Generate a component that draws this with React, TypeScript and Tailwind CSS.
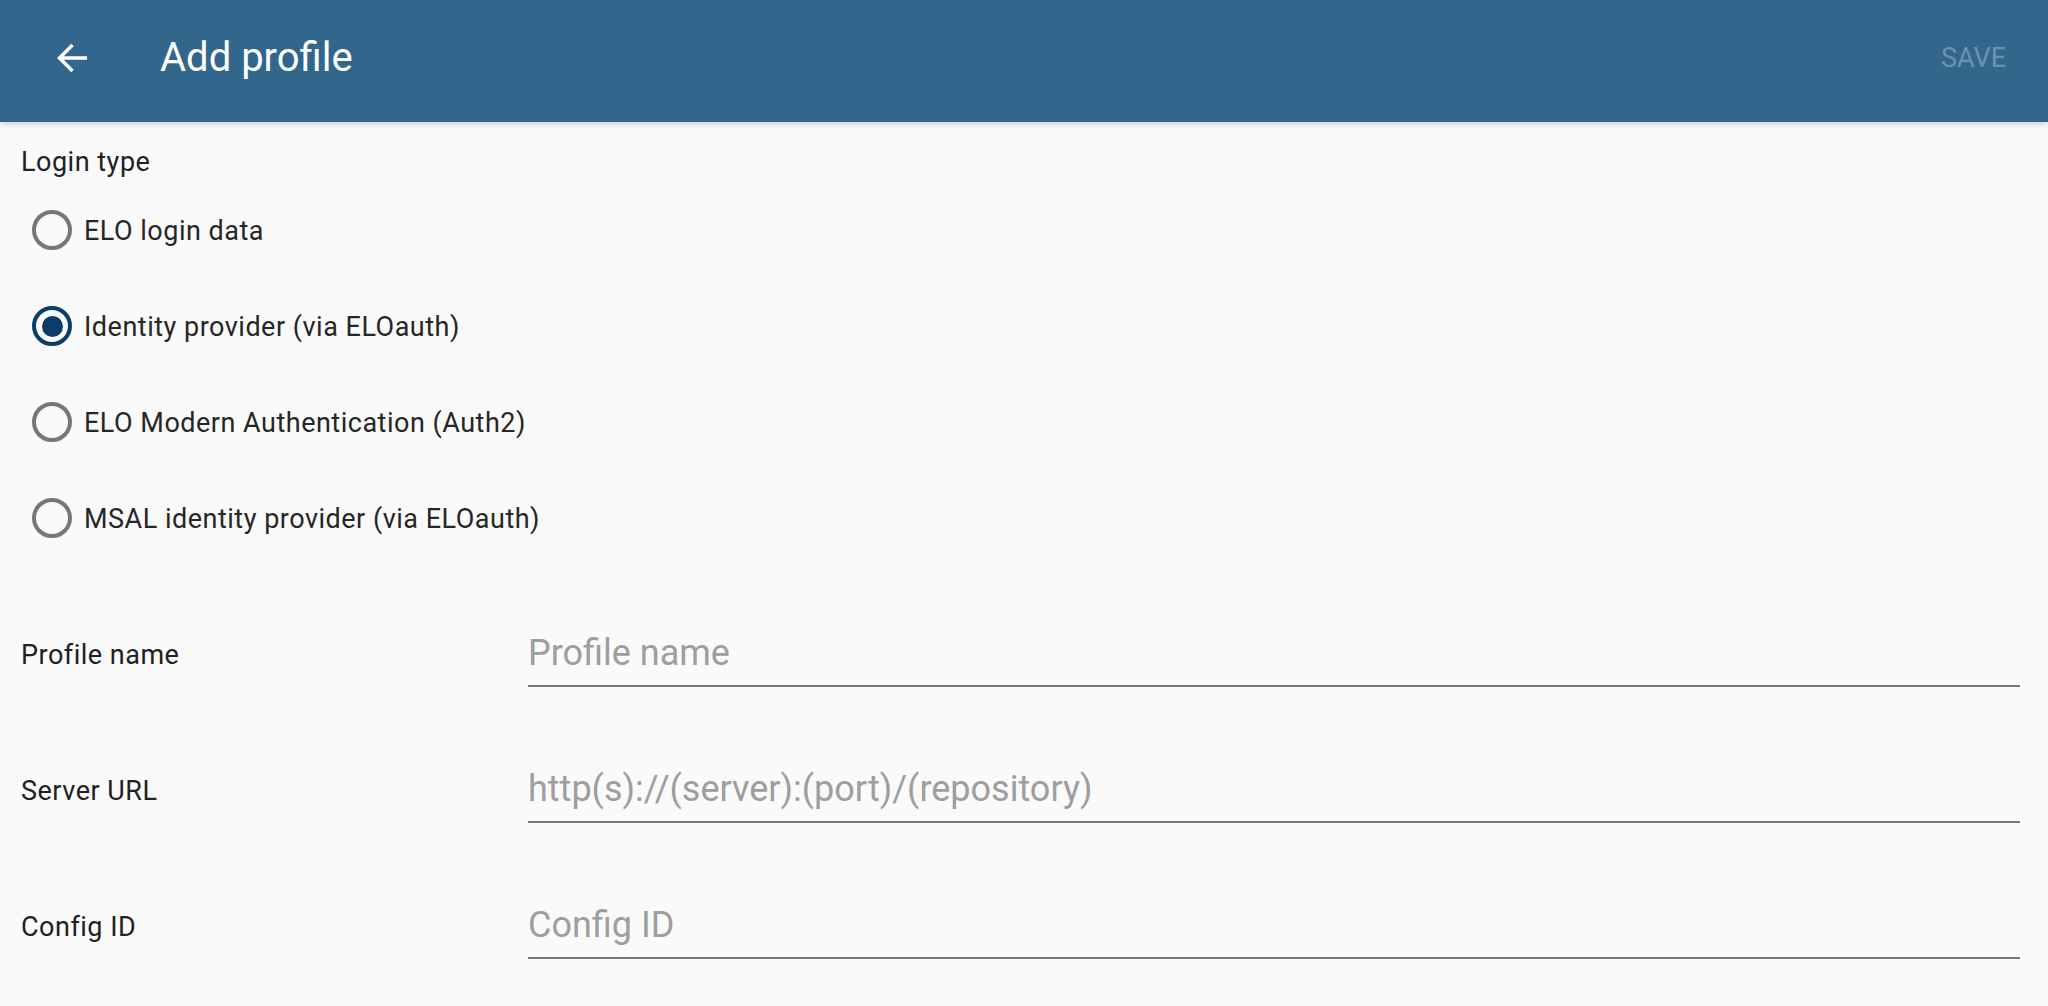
import { useState } from 'react'

const loginTypes = [
  'ELO login data',
  'Identity provider (via ELOauth)',
  'ELO Modern Authentication (Auth2)',
  'MSAL identity provider (via ELOauth)',
]

const fields = [
  { label: 'Profile name', placeholder: 'Profile name' },
  { label: 'Server URL', placeholder: 'http(s)://(server):(port)/(repository)' },
  { label: 'Config ID', placeholder: 'Config ID' },
]

function BackArrow() {
  return (
    <svg width="34" height="32" viewBox="0 0 34 32" fill="none">
      <path d="M32 16H4" stroke="white" strokeWidth="3.5" />
      <path d="M17.5 3 4.5 16l13 13" stroke="white" strokeWidth="3.5" />
    </svg>
  )
}

function Radio({ checked }: { checked: boolean }) {
  return (
    <span
      className={`flex h-[40px] w-[40px] shrink-0 items-center justify-center rounded-full border-[4px] ${
        checked ? 'border-[#0b3d6b]' : 'border-[#777777]'
      }`}
    >
      {checked && <span className="h-[21px] w-[21px] rounded-full bg-[#0b3d6b]" />}
    </span>
  )
}

export default function App() {
  const [selected, setSelected] = useState(1)

  return (
    <div
      className="min-h-[1006px] w-full bg-[#fafafa] text-[#212121]"
      style={{ fontFamily: 'Roboto, "Noto Sans", sans-serif' }}
    >
      {/* Top bar */}
      <header className="relative z-10 flex h-[122px] items-center bg-[#32668d] pb-[6px] pl-[55px] pr-[42px] shadow-[0_2px_6px_rgba(0,0,0,0.18)]">
        <button className="flex h-[34px] w-[34px] items-center justify-center">
          <BackArrow />
        </button>
        <h1 className="ml-[71px] text-[40px] font-normal leading-none text-white">Add profile</h1>
        <button className="ml-auto text-[27px] uppercase leading-none text-white/30">Save</button>
      </header>

      <main className="pl-[21px] pr-[28px]">
        {/* Login type */}
        <div className="pt-[23px] text-[27px] leading-[34px] tracking-[0.5px]">Login type</div>
        <div className="mt-[3px] flex flex-col">
          {loginTypes.map((type, i) => (
            <label
              key={type}
              onClick={() => setSelected(i)}
              className="flex h-[96px] cursor-pointer items-center gap-[12px] pl-[11px] text-[27px] tracking-[0.5px]"
            >
              <Radio checked={selected === i} />
              <span className="pt-[2px] text-[#262626]">{type}</span>
            </label>
          ))}
        </div>

        {/* Fields */}
        <div className="mt-[53px] flex flex-col gap-[68px]">
          {fields.map((f) => (
            <div key={f.label} className="flex items-center">
              <span className="w-[507px] shrink-0 pt-[5px] text-[27px] tracking-[0.5px]">{f.label}</span>
              <input
                placeholder={f.placeholder}
                className="h-[68px] flex-1 border-b-2 border-[#777777] bg-transparent pt-[2px] text-[36px] outline-none placeholder:text-[#9e9e9e]"
              />
            </div>
          ))}
        </div>
      </main>
    </div>
  )
}
